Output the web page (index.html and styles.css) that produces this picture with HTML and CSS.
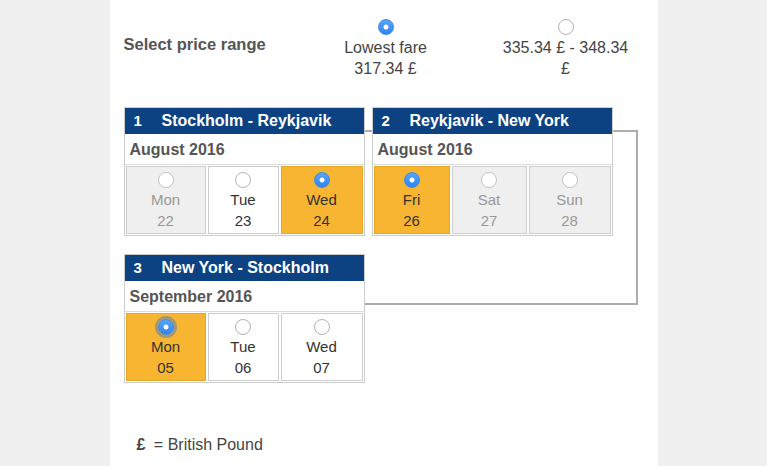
FILE: index.html
```html
<!DOCTYPE html>
<html>
<head>
<meta charset="utf-8">
<title>Select flights</title>
<link rel="stylesheet" href="styles.css">
</head>
<body>
<div class="page">
    <div class="price">
        <div class="price-label">Select price range</div>
        <label class="price-option">
            <input type="radio" name="price" class="radio" checked>
            <span>Lowest fare<br>317.34 £</span>
        </label>
        <label class="price-option">
            <input type="radio" name="price" class="radio">
            <span>335.34 £ - 348.34 £</span>
        </label>
    </div>

    <div class="legs">
        <div class="bracket"></div>

        <div class="leg">
            <div class="leg-head"><span class="leg-num">1</span>Stockholm - Reykjavik</div>
            <div class="leg-month">August 2016</div>
            <div class="days days-a">
                <label class="day disabled"><input type="radio" name="leg1" class="radio" disabled>Mon<br>22</label>
                <label class="day"><input type="radio" name="leg1" class="radio">Tue<br>23</label>
                <label class="day selected"><input type="radio" name="leg1" class="radio" checked>Wed<br>24</label>
            </div>
        </div>

        <div class="leg">
            <div class="leg-head"><span class="leg-num">2</span>Reykjavik - New York</div>
            <div class="leg-month">August 2016</div>
            <div class="days days-b">
                <label class="day selected"><input type="radio" name="leg2" class="radio" checked>Fri<br>26</label>
                <label class="day disabled"><input type="radio" name="leg2" class="radio" disabled>Sat<br>27</label>
                <label class="day disabled"><input type="radio" name="leg2" class="radio" disabled>Sun<br>28</label>
            </div>
        </div>

        <div class="leg">
            <div class="leg-head"><span class="leg-num">3</span>New York - Stockholm</div>
            <div class="leg-month">September 2016</div>
            <div class="days days-a">
                <label class="day selected"><input type="radio" name="leg3" class="radio focused" checked>Mon<br>05</label>
                <label class="day"><input type="radio" name="leg3" class="radio">Tue<br>06</label>
                <label class="day"><input type="radio" name="leg3" class="radio">Wed<br>07</label>
            </div>
        </div>
    </div>

    <p class="currency"><b>£</b> = British Pound</p>
</div>
</body>
</html>
```

FILE: styles.css
```css
* {
  font-family: "Liberation Sans", Arial, sans-serif;
  box-sizing: border-box;
}
html {
  height: 100%;
}
body {
  margin: 0;
  min-height: 100%;
  background: #f0f0f0;
  color: #333;
}

.page {
  width: 548px;
  min-height: 466px;
  margin: 0 auto;
  padding: 19px 0 0 14px;
  background: #fff;
}

/* radio buttons */
.radio {
  -webkit-appearance: none;
  appearance: none;
  display: block;
  width: 16px;
  height: 16px;
  margin: 0 auto;
  border: 1px solid #b3b3b3;
  border-radius: 50%;
  background: #fff;
}
.radio:disabled {
  border-color: #c4c4c4;
}
.radio:checked {
  border-color: #3d8ae8;
  background: radial-gradient(circle, #fff 0, #fff 2.2px, transparent 2.8px),
              linear-gradient(#58a6fb, #2f84ef);
}
.radio.focused {
  box-shadow: 0 0 0 3px rgba(90, 125, 175, 0.55);
}

/* price range */
.price {
  display: grid;
  grid-template-columns: 147px 130px 130px;
  column-gap: 50px;
}
.price-label {
  margin-top: 15px;
  font-size: 16.5px;
  line-height: 21px;
  font-weight: bold;
  color: #555;
  white-space: nowrap;
}
.price-option {
  text-align: center;
  font-size: 16px;
  line-height: 21px;
  color: #444;
}
.price-option .radio {
  margin-bottom: 2px;
}

/* legs */
.legs {
  position: relative;
  display: grid;
  grid-template-columns: 241px 241px;
  column-gap: 7px;
  row-gap: 18px;
  margin-top: 28px;
}
.bracket {
  position: absolute;
  left: 200px;
  top: 23px;
  width: 314px;
  height: 175px;
  border: 2px solid #adadad;
  border-left: none;
}
.leg {
  position: relative;
  background: #fff;
  border: 1px solid #cdcdcd;
}
.leg-head {
  height: 26px;
  padding-left: 9px;
  background: #0c4281;
  color: #fff;
  font-size: 16px;
  font-weight: bold;
  line-height: 26px;
}
.leg-num {
  display: inline-block;
  width: 28px;
  font-size: 15px;
}
.leg-month {
  height: 31px;
  padding-left: 5px;
  border-bottom: 1px solid #dcdcdc;
  font-size: 16px;
  font-weight: bold;
  line-height: 32px;
  color: #555;
}
.days {
  display: grid;
  column-gap: 2px;
  padding: 1px;
}
.days-a {
  grid-template-columns: 80px 71px 1fr;
}
.days-b {
  grid-template-columns: 76px 75px 1fr;
}
.day {
  height: 68px;
  padding-top: 5px;
  border: 1px solid #cdcdcd;
  background: #fff;
  text-align: center;
  font-size: 15px;
  line-height: 21px;
  color: #333;
}
.day .radio {
  margin-bottom: 1px;
}
.day.disabled {
  background: #efefef;
  color: #999;
}
.day.selected {
  background: #f8b532;
  border-color: #e8a626;
}

.currency {
  margin: 51px 0 0 13px;
  font-size: 16px;
  line-height: 21px;
  color: #444;
}
.currency b {
  margin-right: 4px;
}
```
